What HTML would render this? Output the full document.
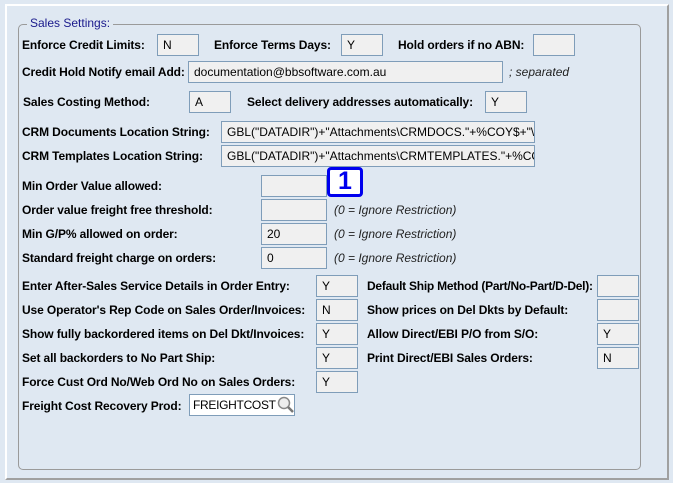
<!DOCTYPE html>
<html><head><meta charset="utf-8"><style>
*{margin:0;padding:0;box-sizing:border-box}
body{width:673px;height:483px;background:#dfe8f2;position:relative;overflow:hidden;font-family:"Liberation Sans",Arial,sans-serif;font-size:12px;color:#000}
.outer{position:absolute;left:5px;top:4px;width:664px;height:476px;border-top:2px solid #fff;border-left:2px solid #fff;border-right:2px solid #a0a0a0;border-bottom:2px solid #a0a0a0;background:#dfe8f2}
.grp{position:absolute;left:18px;top:24px;width:623px;height:446px;border:1px solid #9a9a9a;border-radius:5px}
.leg{position:absolute;left:27px;top:16px;background:#dfe8f2;color:#1a1a8c;padding:0 3px;font-size:12px}
.l{position:absolute;font-weight:bold;white-space:nowrap;line-height:14px;letter-spacing:-0.12px}
.i{position:absolute;height:22px;background:#f0f0f0;border:1px solid #7f9db9;padding:2px 0 0 5px;line-height:16px;white-space:nowrap;overflow:hidden;font-size:12px}
.n{position:absolute;font-style:italic;white-space:nowrap;color:#222;line-height:14px}
.badge{position:absolute;left:327px;top:167px;width:36px;height:30px;border:3px solid #0000ee;border-radius:4px;background:#fff;color:#0000ee;font-weight:bold;font-size:25px;text-align:center;line-height:23px}
</style></head><body>
<div class="outer"></div>
<div class="grp"></div>
<div class="leg">Sales Settings:</div>

<div class="l" style="left:22px;top:38px">Enforce Credit Limits:</div>
<div class="i" style="left:157px;top:34px;width:42px">N</div>
<div class="l" style="left:214px;top:38px">Enforce Terms Days:</div>
<div class="i" style="left:341px;top:34px;width:42px">Y</div>
<div class="l" style="left:398px;top:38px">Hold orders if no ABN:</div>
<div class="i" style="left:533px;top:34px;width:42px"></div>

<div class="l" style="left:22px;top:65px">Credit Hold Notify email Add:</div>
<div class="i" style="left:188px;top:61px;width:315px">documentation@bbsoftware.com.au</div>
<div class="n" style="left:509px;top:65px">; separated</div>

<div class="l" style="left:23px;top:95px">Sales Costing Method:</div>
<div class="i" style="left:189px;top:91px;width:42px">A</div>
<div class="l" style="left:247px;top:95px">Select delivery addresses automatically:</div>
<div class="i" style="left:485px;top:91px;width:42px">Y</div>

<div class="l" style="left:22px;top:125px">CRM Documents Location String:</div>
<div class="i" style="left:221px;top:121px;width:314px">GBL("DATADIR")+"Attachments\CRMDOCS."+%COY$+"\"</div>
<div class="l" style="left:22px;top:149px">CRM Templates Location String:</div>
<div class="i" style="left:221px;top:145px;width:314px">GBL("DATADIR")+"Attachments\CRMTEMPLATES."+%COY$</div>

<div class="l" style="left:22px;top:179px">Min Order Value allowed:</div>
<div class="i" style="left:261px;top:175px;width:66px"></div>
<div class="badge">1</div>
<div class="l" style="left:22px;top:203px">Order value freight free threshold:</div>
<div class="i" style="left:261px;top:199px;width:66px"></div>
<div class="n" style="left:334px;top:203px">(0 = Ignore Restriction)</div>
<div class="l" style="left:22px;top:227px">Min G/P% allowed on order:</div>
<div class="i" style="left:261px;top:223px;width:66px">20</div>
<div class="n" style="left:334px;top:227px">(0 = Ignore Restriction)</div>
<div class="l" style="left:22px;top:251px">Standard freight charge on orders:</div>
<div class="i" style="left:261px;top:247px;width:66px">0</div>
<div class="n" style="left:334px;top:251px">(0 = Ignore Restriction)</div>

<div class="l" style="left:22px;top:279px">Enter After-Sales Service Details in Order Entry:</div>
<div class="i" style="left:316px;top:275px;width:42px">Y</div>
<div class="l" style="left:367px;top:279px;letter-spacing:-0.25px">Default Ship Method (Part/No-Part/D-Del):</div>
<div class="i" style="left:597px;top:275px;width:42px"></div>

<div class="l" style="left:22px;top:303px">Use Operator's Rep Code on Sales Order/Invoices:</div>
<div class="i" style="left:316px;top:299px;width:42px">N</div>
<div class="l" style="left:367px;top:303px">Show prices on Del Dkts by Default:</div>
<div class="i" style="left:597px;top:299px;width:42px"></div>

<div class="l" style="left:22px;top:327px">Show fully backordered items on Del Dkt/Invoices:</div>
<div class="i" style="left:316px;top:323px;width:42px">Y</div>
<div class="l" style="left:367px;top:327px">Allow Direct/EBI P/O from S/O:</div>
<div class="i" style="left:597px;top:323px;width:42px">Y</div>

<div class="l" style="left:22px;top:351px">Set all backorders to No Part Ship:</div>
<div class="i" style="left:316px;top:347px;width:42px">Y</div>
<div class="l" style="left:367px;top:351px">Print Direct/EBI Sales Orders:</div>
<div class="i" style="left:597px;top:347px;width:42px">N</div>

<div class="l" style="left:22px;top:375px">Force Cust Ord No/Web Ord No on Sales Orders:</div>
<div class="i" style="left:316px;top:371px;width:42px">Y</div>

<div class="l" style="left:22px;top:399px">Freight Cost Recovery Prod:</div>
<div class="i" style="left:189px;top:394px;width:106px;background:#fff;padding-left:3px;letter-spacing:-0.3px">FREIGHTCOST</div>
<svg style="position:absolute;left:277px;top:396px" width="18" height="18" viewBox="0 0 18 18"><circle cx="7" cy="7" r="5.5" fill="#eee" stroke="#888" stroke-width="1.5"/><line x1="11" y1="11" x2="16" y2="16" stroke="#777" stroke-width="2.5"/></svg>
</body></html>
